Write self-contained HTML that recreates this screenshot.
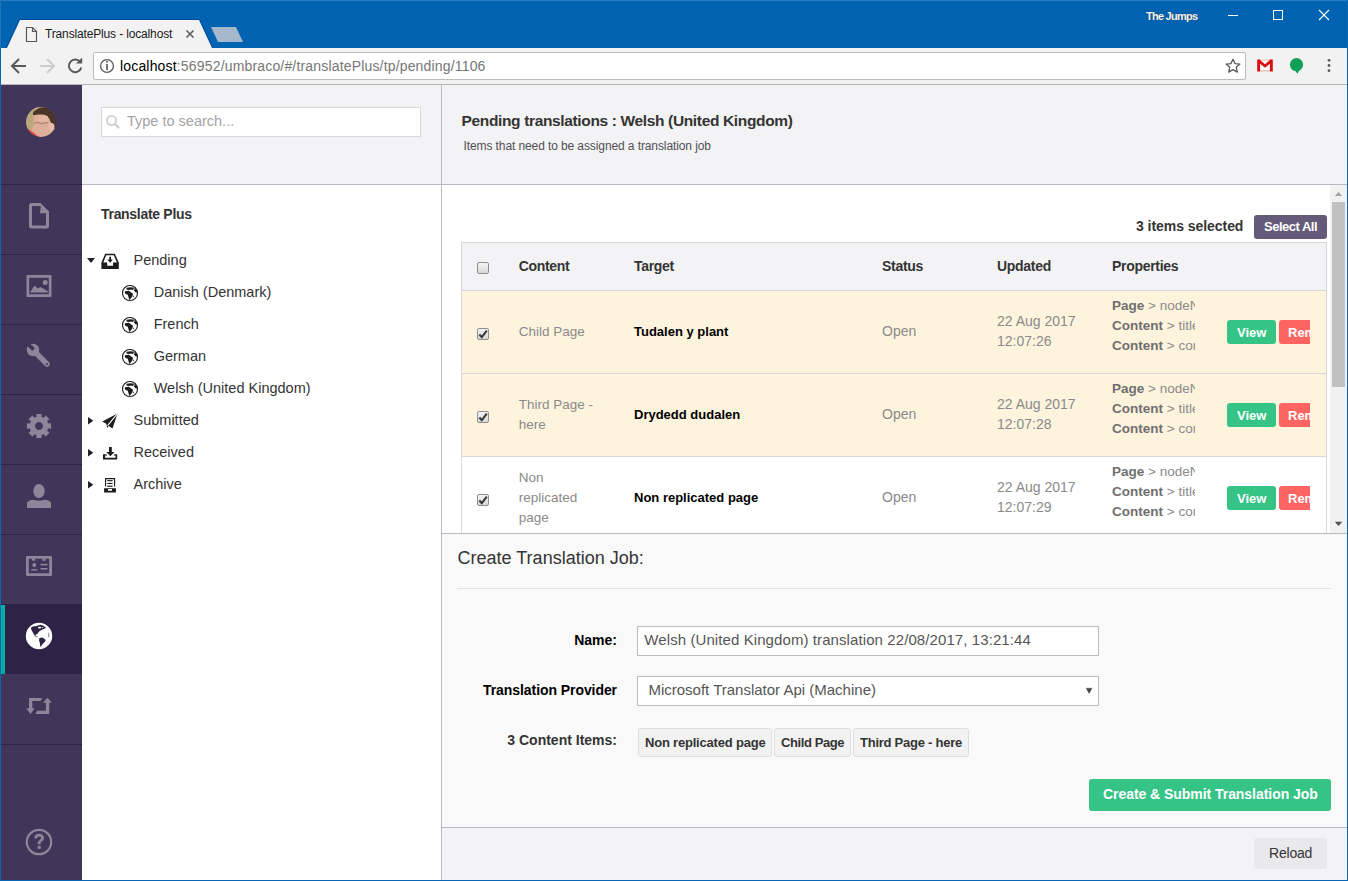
<!DOCTYPE html>
<html><head><meta charset="utf-8">
<style>
*{box-sizing:border-box;margin:0;padding:0}
html,body{width:1348px;height:881px;overflow:hidden;background:#fff;font-family:"Liberation Sans",sans-serif;color:#343434}
.a{position:absolute}
.t{position:absolute;white-space:nowrap;line-height:1}
svg{position:absolute;overflow:visible}
.tr{font-size:14.5px;color:#343434}
.th{font-size:14px;font-weight:bold;color:#343434;letter-spacing:-0.3px}
.cg{font-size:13.5px;color:#8a8a8a}
.tg{font-size:13px;font-weight:bold;color:#000}
.dt{font-size:14px;color:#8a8a8a}
.pr{font-size:13.5px;color:#8a8a8a;line-height:20px;white-space:nowrap;overflow:hidden;width:83px}
.pr b{color:#6f6f6f}
.btn{position:absolute;border-radius:3px;color:#fff;font-weight:bold;font-size:13px;line-height:1;white-space:nowrap;overflow:hidden}
.cb{position:absolute;width:12px;height:12px;border:1px solid #8f8f8f;border-radius:2px;background:linear-gradient(#f4f4f4,#d8d8d8)}
.tag{position:absolute;top:728px;height:29px;background:#f2f2f2;border:1px solid #dedede;border-radius:3px}
</style></head><body>
<!-- ============ BROWSER CHROME ============ -->
<div class="a" style="left:0;top:0;width:1348px;height:48px;background:#0063b1"></div>
<div class="a" style="left:0;top:0;width:1348px;height:1px;background:#2a7cc4"></div>
<svg style="left:0;top:0" width="260" height="48">
  <path d="M6.3,48.5 L19.6,19.5 H199.4 L212.7,48.5" fill="none" stroke="#004a94" stroke-width="1"/>
  <polygon points="7,48 20,20 199,20 212,48" fill="#f2f2f2"/>
  <polygon points="211,27 236,27 243,42 218,42" fill="#a6b8cc"/>
  <!-- page icon -->
  <path d="M26.5,27.5 H32.5 L36.5,31.5 V41.5 H26.5 Z" fill="none" stroke="#595959" stroke-width="1.2"/>
  <path d="M32.5,27.5 V31.5 H36.5" fill="none" stroke="#595959" stroke-width="1.2"/>
  <!-- close x -->
  <path d="M186.5,30.5 L193.5,37.5 M193.5,30.5 L186.5,37.5" stroke="#5c5c5c" stroke-width="1.6"/>
</svg>
<div id="tabtitle" class="t" style="left:45px;top:28px;font-size:12px;color:#1a1a1a;letter-spacing:-0.15px">TranslatePlus - localhost</div>
<div class="t" style="left:1146px;top:11px;font-size:11px;font-weight:bold;color:#f4f4f4;letter-spacing:-0.75px;text-shadow:0 0 1px #333">The Jumps</div>
<svg style="left:1200px;top:0" width="148" height="30">
  <path d="M28,15.5 H38" stroke="#fff" stroke-width="1"/>
  <rect x="73.5" y="10.5" width="9" height="9" fill="none" stroke="#fff" stroke-width="1"/>
  <path d="M119,10 L129,20 M129,10 L119,20" stroke="#fff" stroke-width="1.1"/>
</svg>
<!-- toolbar -->
<div class="a" style="left:0;top:48px;width:1348px;height:36px;background:#f2f2f2"></div>
<div class="a" style="left:0;top:84px;width:1348px;height:1px;background:#b4b4b4"></div>
<div class="a" style="left:93px;top:52px;width:1153px;height:28px;background:#fff;border:1px solid #bdbdbd;border-radius:2px"></div>
<svg style="left:0;top:48px" width="130" height="36">
  <path d="M26,18 H13 M19,11 L12,18 L19,25" fill="none" stroke="#5a5a5a" stroke-width="2"/>
  <path d="M40,18 H53 M47,11 L54,18 L47,25" fill="none" stroke="#cdcdcd" stroke-width="2"/>
  <path d="M80.2,14 A6.3,6.3 0 1 0 81.3,19.5" fill="none" stroke="#5a5a5a" stroke-width="2"/>
  <path d="M76,15.5 L82.2,15.5 L82.2,9.5 Z" fill="#5a5a5a"/>
  <circle cx="107" cy="18" r="6.4" fill="none" stroke="#5a5a5a" stroke-width="1.3"/>
  <rect x="106.2" y="16" width="1.7" height="6" fill="#5a5a5a"/>
  <rect x="106.2" y="13" width="1.7" height="1.7" fill="#5a5a5a"/>
</svg>
<div id="url" class="t" style="left:120px;top:59px;font-size:14px;color:#767676;letter-spacing:0.17px"><span style="color:#000">localhost</span>:56952/umbraco/#/translatePlus/tp/pending/1106</div>
<svg style="left:1210px;top:48px" width="138" height="36">
  <path d="M23,11.2 L25.1,15.6 L29.9,16.1 L26.3,19.3 L27.3,24.1 L23,21.6 L18.7,24.1 L19.7,19.3 L16.1,16.1 L20.9,15.6 Z" fill="none" stroke="#5a5a5a" stroke-width="1.3" stroke-linejoin="round"/>
  <rect x="47.2" y="11.6" width="15.6" height="11.8" fill="#fff"/>
  <rect x="47.2" y="11.6" width="15.6" height="1" fill="#f0b8b8"/>
  <rect x="47.2" y="22.4" width="15.6" height="1" fill="#e0a0a0"/>
  <rect x="47.2" y="11.6" width="2.9" height="11.8" fill="#d90f0f"/>
  <rect x="59.9" y="11.6" width="2.9" height="11.8" fill="#d90f0f"/>
  <path d="M48.3,12.4 L55,18 L61.7,12.4" fill="none" stroke="#d90f0f" stroke-width="2.7"/>
  <circle cx="86.5" cy="16.7" r="6.6" fill="#139f55"/>
  <path d="M84.2,21 L90.2,20.5 L87.4,25.8 Z" fill="#139f55"/>
  <circle cx="119" cy="12.3" r="1.4" fill="#5a5a5a"/>
  <circle cx="119" cy="17.5" r="1.4" fill="#5a5a5a"/>
  <circle cx="119" cy="22.7" r="1.4" fill="#5a5a5a"/>
</svg>

<!-- window borders -->
<div class="a" style="left:0;top:0;width:1px;height:881px;background:#0a66b4"></div>
<div class="a" style="left:0;top:0;width:1px;height:48px;background:#2574ba"></div>
<div class="a" style="left:1347px;top:0;width:1px;height:881px;background:#0a66b4"></div>
<div class="a" style="left:0;top:880px;width:1348px;height:1px;background:#0a66b4"></div>

<!-- ============ SIDEBAR ============ -->
<div class="a" style="left:1px;top:85px;width:81px;height:795px;background:#413659"></div>
<div class="a" style="left:1px;top:604px;width:81px;height:70px;background:#2e2246"></div>
<div class="a" style="left:1px;top:605px;width:4px;height:69px;background:#00aea2"></div>
<svg style="left:0;top:0" width="82" height="881">
  <g fill="#2e2246">
    <rect x="1" y="184" width="81" height="1"/><rect x="1" y="254" width="81" height="1"/>
    <rect x="1" y="324" width="81" height="1"/><rect x="1" y="394" width="81" height="1"/>
    <rect x="1" y="464" width="81" height="1"/><rect x="1" y="534" width="81" height="1"/>
    <rect x="1" y="744" width="81" height="1"/>
  </g>
  <!-- avatar -->
  <defs><clipPath id="av"><circle cx="41" cy="122" r="15"/></clipPath><filter id="avb" x="-10%" y="-10%" width="120%" height="120%"><feGaussianBlur stdDeviation="0.7"/></filter></defs>
  <g clip-path="url(#av)"><g filter="url(#avb)">
    <rect x="24" y="105" width="34" height="34" fill="#dfae9a"/>
    <path d="M24,105 H36 L34,112 L33,128 L30,131 L24,131 Z" fill="#baa97c"/>
    <path d="M33,113 C36,107 46,106 52,109 C57,112 58,120 56,128 L52,128 C51,121 49,116 45,115 C41,114 36,115 33,115 Z" fill="#4b3628"/>
    <path d="M28,129 C32,131 36,134 40,139 L24,139 L24,129 Z" fill="#e24a42"/>
    <path d="M33.5,123.5 C36,122 39,122.5 41,124 M41,124 C43,123 46,122.5 48,123" stroke="#7a5a4a" stroke-width="0.9" fill="none" opacity="0.7"/>
    <ellipse cx="51.5" cy="127" rx="3" ry="4" fill="#e9bcaa"/>
    <rect x="38" y="116" width="10" height="5" fill="#e8c0ac" opacity="0.6"/>
  </g></g>
  <g fill="#8d869b" stroke="none">
    <!-- content doc -->
    <path fill-rule="evenodd" d="M31.5,203 H40.5 L49,211.5 V226 A2.5,2.5 0 0 1 46.5,228.5 H31.5 A2.5,2.5 0 0 1 29,226 V205.5 A2.5,2.5 0 0 1 31.5,203 Z M32,206 V225.5 H46 V213.3 H40 L40.8,206 Z"/>
    <!-- media -->
    <path fill-rule="evenodd" d="M27.5,275 H50.5 A1,1 0 0 1 51.5,276 V296 A1,1 0 0 1 50.5,297 H27.5 A1,1 0 0 1 26.5,296 V276 A1,1 0 0 1 27.5,275 Z M29.2,277.7 V294.3 H48.8 V277.7 Z"/>
    <circle cx="45.2" cy="282.5" r="2.5"/>
    <path d="M30,292.3 L34.5,285.7 L38,288.5 L40.5,287 L48,291.3 L47.5,292.5 H30.5 Z"/>
    <!-- wrench -->
    <circle cx="33" cy="350" r="6.2"/>
    <path d="M33,350 L47,364" stroke="#8d869b" stroke-width="5.4" stroke-linecap="round"/>
    <path d="M33.6,349.6 L25,341" stroke="#413659" stroke-width="3.8"/>
    <circle cx="47" cy="364" r="1.1" fill="#413659"/>
    <!-- gear -->
    <path fill-rule="evenodd" d="M36.49,416.94 L36.32,413.89 L41.68,413.89 L41.51,416.94 L43.63,417.82 L45.66,415.54 L49.46,419.34 L47.18,421.37 L48.06,423.49 L51.11,423.32 L51.11,428.68 L48.06,428.51 L47.18,430.63 L49.46,432.66 L45.66,436.46 L43.63,434.18 L41.51,435.06 L41.68,438.11 L36.32,438.11 L36.49,435.06 L34.37,434.18 L32.34,436.46 L28.54,432.66 L30.82,430.63 L29.94,428.51 L26.89,428.68 L26.89,423.32 L29.94,423.49 L30.82,421.37 L28.54,419.34 L32.34,415.54 L34.37,417.82 Z M39,422 A4,4 0 1 0 39.01,422 Z"/>
    <!-- user -->
    <ellipse cx="39" cy="491" rx="5.7" ry="7"/>
    <path d="M27,502.5 C28,501 31,500 34,499.8 C36,501 42,501 44,499.8 C47,500 50,501 51,502.5 V508 H27 Z"/>
    <!-- card -->
    <path fill-rule="evenodd" d="M27,556 H51 A1,1 0 0 1 52,557 V575 A1,1 0 0 1 51,576 H27 A1,1 0 0 1 26,575 V557 A1,1 0 0 1 27,556 Z M28.8,558.8 V573.2 H49.2 V558.8 Z"/>
    <rect x="31.8" y="558.5" width="3.4" height="2.2"/><rect x="42.4" y="558.5" width="3.4" height="2.2"/>
    <circle cx="34.3" cy="565" r="2"/>
    <path d="M30.5,570.5 C31,568.5 37.5,568.5 38,570.5 Z"/>
    <rect x="40.5" y="563.8" width="7" height="1.6"/><rect x="40.5" y="568" width="7" height="1.6"/>
    <!-- arrows -->
    <path d="M29,698 H42.3 L40.5,701 H32.3 V708.3 H34.7 L30.5,714.1 L26.2,708.3 H29 Z"/>
    <path d="M49.2,713.9 H35.3 L37.3,710.8 H45.9 V702.7 H43 L47.5,697.7 L51.8,702.7 H49.2 Z"/>
    <!-- help -->
    <circle cx="39" cy="842" r="12.2" fill="none" stroke="#8d869b" stroke-width="2.2"/>
    <path d="M34.4,838.3 C34.4,835.2 36.6,833.8 39.2,833.8 C42,833.8 44,835.5 44,838 C44,840.2 42.4,841.1 41.3,841.8 C40.6,842.3 40.6,842.8 40.6,844.3 H37.7 C37.7,842.3 37.9,841.2 39.4,840.2 C40.7,839.3 41.1,838.9 41.1,838.1 C41.1,837.2 40.4,836.5 39.2,836.5 C38,836.5 37.2,837.3 37.2,838.6 Z"/>
    <rect x="37.6" y="845.8" width="3.1" height="3"/>
  </g>
  <!-- active globe -->
  <circle cx="39" cy="636" r="13.2" fill="#fff"/>
  <g fill="#2e2246">
    <path d="M30.9,628.3 L32,626.7 L34.5,626.3 L36.7,626 L40.1,624.8 L43,625.6 L45.2,627.1 L45.9,627.9 L42.1,629.8 L39.8,631 L38.2,632.5 L37.4,634.1 L35.9,634.4 L35.3,635.4 L36.5,636.2 L38.2,636.9 L37.6,637.3 L35.1,636.2 L33.6,633.7 L32,631 L31.3,629.4 Z"/>
    <path d="M37.8,627.2 L40,626.4 L41.5,627.4 L40.2,628.6 L38.6,628.4 Z" fill="#fff"/>
    <path d="M41.8,626.9 L43.5,627.3 L42.6,628.3 Z" fill="#fff"/>
    <path d="M39.4,637.9 L42.5,637.5 L45.6,639.8 L45.2,641.4 L42.8,643.7 L40.9,646.4 L40.1,646.8 L40.1,643.7 L39,640.6 Z"/>
    <path d="M48.6,632.5 L49.3,633.2 L49,635 L49.4,637.5 L48.4,636.5 L48.6,634.5 Z"/>
  </g>
</svg>


<!-- ============ TREE PANEL ============ -->
<div class="a" style="left:82px;top:85px;width:359px;height:99px;background:#f3f3f5"></div>
<div class="a" style="left:82px;top:184px;width:359px;height:1px;background:#bbb8c4"></div>
<div class="a" style="left:441px;top:85px;width:1px;height:795px;background:#bbb8c4"></div>
<div class="a" style="left:101px;top:107px;width:320px;height:30px;background:#fff;border:1px solid #d8d7d9"></div>
<svg style="left:82px;top:85px" width="359" height="420">
  <!-- search icon -->
  <circle cx="29.5" cy="35.5" r="4.6" fill="none" stroke="#cfcfcf" stroke-width="1.8"/>
  <path d="M32.8,38.8 L36.5,42.5" stroke="#cfcfcf" stroke-width="2.4" stroke-linecap="round"/>
</svg>
<div class="t" style="left:127px;top:114px;font-size:14.5px;color:#a3a3a3">Type to search...</div>
<div class="t" style="left:101px;top:207px;font-size:14px;font-weight:bold;color:#343434;letter-spacing:-0.3px">Translate Plus</div>

<div class="t tr" style="left:133.5px;top:252.7px">Pending</div>
<div class="t tr" style="left:153.7px;top:284.7px">Danish (Denmark)</div>
<div class="t tr" style="left:153.7px;top:316.7px">French</div>
<div class="t tr" style="left:153.7px;top:348.7px">German</div>
<div class="t tr" style="left:153.7px;top:380.7px">Welsh (United Kingdom)</div>
<div class="t tr" style="left:133.5px;top:412.7px">Submitted</div>
<div class="t tr" style="left:133.5px;top:444.7px">Received</div>
<div class="t tr" style="left:133.5px;top:476.7px">Archive</div>

<svg style="left:0;top:0" width="441" height="881">
  <defs>
    <g id="tglobe">
      <circle cx="0" cy="0" r="7.5" fill="#fff" stroke="#1b1b1b" stroke-width="1.1"/>
      <path fill="#1b1b1b" d="M-4.7,-1.7 L-1.2,-2.3 L1.2,-0.5 L3,0.7 L2.4,3.6 L0.6,5.4 L-0.6,7.1 L-1.5,4.2 L-2.3,1.8 L-4.7,0.7 L-5.3,-1.1 Z"/>
      <path fill="#1b1b1b" d="M-3.5,-5.2 L1.2,-5.8 L4.1,-5.2 L3,-2.9 L0.6,-3.5 L-1.2,-2.9 L-3.5,-3.5 Z"/>
      <path fill="#1b1b1b" d="M4.6,-5.4 L7.1,-2.3 L7.4,-0.5 L5.9,-0.5 L4.1,-2.3 Z"/>
      <path fill="#1b1b1b" d="M3.6,2.6 L4.2,3.2 L3.8,4.6 L3.2,4 Z"/>
    </g>
  </defs>
  <g fill="#222">
    <path d="M87,258 H95 L91,263 Z"/>
    <path d="M88,417 L93.3,420.7 L88,424.4 Z"/>
    <path d="M88,449 L93.3,452.7 L88,456.4 Z"/>
    <path d="M88,481 L93.3,484.7 L88,488.4 Z"/>
  </g>
  <use href="#tglobe" x="130" y="293"/>
  <use href="#tglobe" x="130" y="325"/>
  <use href="#tglobe" x="130" y="357"/>
  <use href="#tglobe" x="130" y="389"/>
  <g fill="#1b1b1b">
    <!-- inbox -->
    <path fill-rule="evenodd" d="M105.2,253.8 H114.8 L118.8,262.5 V269 H101.4 V262.5 Z M106.2,255.2 L103.3,262.5 H107.2 V265.8 H113 V262.5 H116.9 L113.8,255.2 Z"/>
    <path d="M109.3,256.8 H111 V259.5 H112.9 L110.15,262.8 L107.4,259.5 H109.3 Z"/>
    <!-- paper plane -->
    <path d="M117.5,413.5 L102.2,421.4 L106.3,423.8 L107.2,427.8 L108.8,425.9 L112.5,428.5 Z"/>
    <path d="M116.8,414.4 L107.6,425.6" stroke="#fff" stroke-width="1.1"/>
    <!-- download -->
    <path d="M109,447 H111.8 V452 H114.5 L110.4,456.2 L106.3,452 H109 Z"/>
    <path d="M103,454.2 H106.4 L107.3,455.4 H105.1 V457.8 H115.6 V455.4 H113.5 L114.4,454.2 H117.2 V459.6 H103 Z"/>
    <!-- archive -->
    <path d="M105.6,486.6 L105.6,478.6 H114.6 V486.6" fill="none" stroke="#1b1b1b" stroke-width="1.1"/>
    <rect x="107.3" y="480.1" width="5.3" height="1.1"/>
    <rect x="107.3" y="482.9" width="5.3" height="1.1"/>
    <rect x="107.3" y="485.6" width="5.3" height="1.2"/>
    <path fill-rule="evenodd" d="M104.1,488.2 H115.9 V492.6 H104.1 Z M108,488.9 V490.8 H112 V488.9 Z"/>
  </g>
</svg>


<!-- ============ MAIN ============ -->
<div class="a" style="left:442px;top:85px;width:905px;height:99px;background:#f3f3f5"></div>
<div class="a" style="left:442px;top:184px;width:905px;height:1px;background:#bbb8c4"></div>
<div class="t" style="left:461.5px;top:113.1px;font-size:15.5px;font-weight:bold;color:#343434;letter-spacing:-0.35px">Pending translations : Welsh (United Kingdom)</div>
<div class="t" style="left:463.5px;top:139.8px;font-size:12px;color:#515054;letter-spacing:-0.1px">Items that need to be assigned a translation job</div>

<!-- scroll area -->
<div class="a" style="left:442px;top:185px;width:888px;height:348px;background:#fff;overflow:hidden">
  <div class="t" style="left:694px;top:33.6px;font-size:14px;font-weight:bold;color:#343434;letter-spacing:-0.05px">3 items selected</div>
  <div class="btn" style="left:812px;top:30px;width:73px;height:24px;background:#655a7a"><span class="t" style="left:10px;top:5.3px;letter-spacing:-0.5px">Select All</span></div>
  <!-- table -->
  <div class="a" style="left:19px;top:57px;width:866px;height:360px;border:1px solid #d8d7d9;background:#fff"></div>
  <div class="a" style="left:20px;top:58px;width:864px;height:47px;background:#f3f3f5"></div>
  <div class="a" style="left:20px;top:105px;width:864px;height:1px;background:#d8d7d9"></div>
  <div class="a" style="left:20px;top:106px;width:864px;height:82px;background:#fef4de"></div>
  <div class="a" style="left:20px;top:188px;width:864px;height:1px;background:#d8d7d9"></div>
  <div class="a" style="left:20px;top:189px;width:864px;height:82px;background:#fef4de"></div>
  <div class="a" style="left:20px;top:271px;width:864px;height:1px;background:#d8d7d9"></div>
  <div class="a" style="left:20px;top:354px;width:864px;height:1px;background:#d8d7d9"></div>
</div>
<div class="a" style="left:0;top:185px;width:1330px;height:348px;overflow:hidden"><div class="a" style="left:0;top:-185px;width:1330px;height:881px">
<div class="cb" style="left:477px;top:262px"></div>
<div class="t th" style="left:518.7px;top:258.75px;">Content</div>
<div class="t th" style="left:634px;top:258.75px;">Target</div>
<div class="t th" style="left:882px;top:258.75px;">Status</div>
<div class="t th" style="left:997px;top:258.75px;">Updated</div>
<div class="t th" style="left:1112px;top:258.75px;">Properties</div>
<div class="cb" style="left:477px;top:328px"></div>
<svg style="left:477px;top:328px" width="12" height="12"><path d="M2.3,6.5 L4.8,9.2 L9.8,2.6" fill="none" stroke="#3a3a3a" stroke-width="2.1"/></svg>
<div class="t cg" style="left:518.7px;top:324.87px;">Child Page</div>
<div class="t tg" style="left:634px;top:325.00px;">Tudalen y plant</div>
<div class="t dt" style="left:882px;top:324.15px;">Open</div>
<div class="t dt" style="left:997px;top:314.15px;">22 Aug 2017</div>
<div class="t dt" style="left:997px;top:333.85px;">12:07:26</div>
<div class="a pr" style="left:1112px;top:296px"><b>Page</b> &gt; nodeName<br><b>Content</b> &gt; title<br><b>Content</b> &gt; content</div>
<div class="btn" style="left:1227px;top:320px;width:49px;height:24px;background:#35c486"><span class="t" style="left:10px;top:6px">View</span></div>
<div class="btn" style="left:1279px;top:320px;width:31px;height:24px;background:#fe6562;border-radius:3px 0 0 3px"><span class="t" style="left:9px;top:6px">Remove</span></div>
<div class="cb" style="left:477px;top:411px"></div>
<svg style="left:477px;top:411px" width="12" height="12"><path d="M2.3,6.5 L4.8,9.2 L9.8,2.6" fill="none" stroke="#3a3a3a" stroke-width="2.1"/></svg>
<div class="t cg" style="left:518.7px;top:397.87px;">Third Page -</div>
<div class="t cg" style="left:518.7px;top:417.87px;">here</div>
<div class="t tg" style="left:634px;top:408.00px;">Drydedd dudalen</div>
<div class="t dt" style="left:882px;top:407.15px;">Open</div>
<div class="t dt" style="left:997px;top:397.15px;">22 Aug 2017</div>
<div class="t dt" style="left:997px;top:416.85px;">12:07:28</div>
<div class="a pr" style="left:1112px;top:379px"><b>Page</b> &gt; nodeName<br><b>Content</b> &gt; title<br><b>Content</b> &gt; content</div>
<div class="btn" style="left:1227px;top:403px;width:49px;height:24px;background:#35c486"><span class="t" style="left:10px;top:6px">View</span></div>
<div class="btn" style="left:1279px;top:403px;width:31px;height:24px;background:#fe6562;border-radius:3px 0 0 3px"><span class="t" style="left:9px;top:6px">Remove</span></div>
<div class="cb" style="left:477px;top:494px"></div>
<svg style="left:477px;top:494px" width="12" height="12"><path d="M2.3,6.5 L4.8,9.2 L9.8,2.6" fill="none" stroke="#3a3a3a" stroke-width="2.1"/></svg>
<div class="t cg" style="left:518.7px;top:470.87px;">Non</div>
<div class="t cg" style="left:518.7px;top:490.87px;">replicated</div>
<div class="t cg" style="left:518.7px;top:510.87px;">page</div>
<div class="t tg" style="left:634px;top:491.00px;">Non replicated page</div>
<div class="t dt" style="left:882px;top:490.15px;">Open</div>
<div class="t dt" style="left:997px;top:480.15px;">22 Aug 2017</div>
<div class="t dt" style="left:997px;top:499.85px;">12:07:29</div>
<div class="a pr" style="left:1112px;top:462px"><b>Page</b> &gt; nodeName<br><b>Content</b> &gt; title<br><b>Content</b> &gt; content</div>
<div class="btn" style="left:1227px;top:486px;width:49px;height:24px;background:#35c486"><span class="t" style="left:10px;top:6px">View</span></div>
<div class="btn" style="left:1279px;top:486px;width:31px;height:24px;background:#fe6562;border-radius:3px 0 0 3px"><span class="t" style="left:9px;top:6px">Remove</span></div>
</div></div>
<!-- scrollbar -->
<div class="a" style="left:1330px;top:185px;width:17px;height:348px;background:#f1f1f1"></div>
<div class="a" style="left:1332px;top:202px;width:13px;height:185px;background:#c1c1c1"></div>
<svg style="left:1330px;top:185px" width="17" height="348">
  <path d="M4.8,11 L12.2,11 L8.5,7 Z" fill="#a3a3a3"/>
  <path d="M4.8,336.8 L12.2,336.8 L8.5,341 Z" fill="#505050"/>
</svg>

<div class="a" style="left:442px;top:533px;width:905px;height:1px;background:#bbb8c4"></div>
<div class="a" style="left:442px;top:534px;width:905px;height:293px;background:#f9f9f9"></div>
<div class="a" style="left:442px;top:827px;width:905px;height:1px;background:#bbb8c4"></div>
<div class="a" style="left:442px;top:828px;width:905px;height:52px;background:#f3f3f5"></div>
<div class="t" style="left:457.6px;top:548.76px;font-size:18px;color:#343434">Create Translation Job:</div>
<div class="a" style="left:457px;top:588px;width:874px;height:1px;background:#e3e3e3"></div>
<div class="t" style="right:731px;top:633.15px;font-size:14px;font-weight:bold;color:#000">Name:</div>
<div class="a" style="left:637px;top:626px;width:462px;height:30px;background:#fff;border:1px solid #bebcc3"></div>
<div class="t" style="left:644.3px;top:632.00px;font-size:15px;color:#555;letter-spacing:0.09px">Welsh (United Kingdom) translation 22/08/2017, 13:21:44</div>
<div class="t" style="right:731px;top:682.85px;font-size:14px;font-weight:bold;color:#000;letter-spacing:-0.07px">Translation Provider</div>
<div class="a" style="left:637px;top:676px;width:462px;height:30px;background:#fff;border:1px solid #bebcc3"></div>
<div class="t" style="left:648.4px;top:682.00px;font-size:15px;color:#555">Microsoft Translator Api (Machine)</div>
<svg style="left:1080px;top:680px" width="20" height="20"><path d="M6.2,8.2 L12,8.2 L9.1,13.4 Z" fill="#444" stroke="#444" stroke-width="0.4" stroke-linejoin="round"/></svg>
<div class="t" style="right:731px;top:732.95px;font-size:14px;font-weight:bold;color:#343434">3 Content Items:</div>
<div class="tag" style="left:638px;width:134px"></div>
<div class="t" style="left:645px;top:736.00px;font-size:13px;font-weight:bold;color:#343434;letter-spacing:-0.2px">Non replicated page</div>
<div class="tag" style="left:774px;width:77px"></div>
<div class="t" style="left:781px;top:736.00px;font-size:13px;font-weight:bold;color:#343434;letter-spacing:-0.4px">Child Page</div>
<div class="tag" style="left:853px;width:116px"></div>
<div class="t" style="left:860px;top:736.00px;font-size:13px;font-weight:bold;color:#343434;letter-spacing:-0.25px">Third Page - here</div>
<div class="btn" style="left:1089px;top:779px;width:242px;height:32px;background:#35c486"></div>
<div class="t" style="left:1103px;top:786.95px;font-size:14px;font-weight:bold;color:#fff;letter-spacing:-0.05px">Create &amp; Submit Translation Job</div>
<div class="a" style="left:1254px;top:838px;width:73px;height:31px;background:#e9e9eb;border-radius:3px"></div>
<div class="t" style="left:1269px;top:845.65px;font-size:14px;color:#343434;letter-spacing:-0.2px">Reload</div>
</body></html>
